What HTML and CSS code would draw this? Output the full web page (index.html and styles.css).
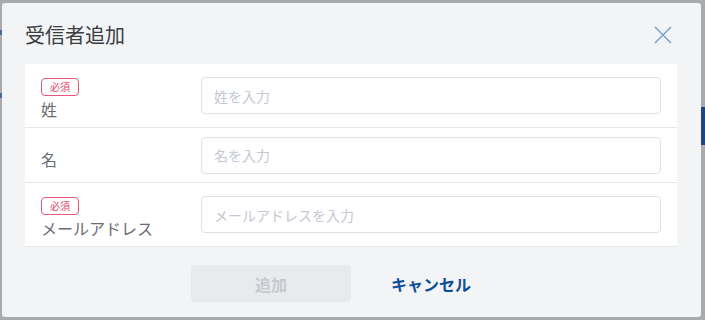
FILE: index.html
```html
<!DOCTYPE html>
<html lang="ja">
<head>
<meta charset="utf-8">
<link rel="stylesheet" href="styles.css">
</head>
<body>
<div class="backdrop">
  <div class="bg-block bg-left1"></div>
  <div class="bg-block bg-left2"></div>
  <div class="bg-block bg-right"></div>
  <div class="modal">
    <div class="modal-header">
      <h1 class="title">受信者追加</h1>
      <button class="close" aria-label="閉じる">
        <svg width="18" height="18" viewBox="0 0 18 18"><path d="M1 1L17 17M17 1L1 17" stroke="#7ba4d0" stroke-width="1.6" fill="none"/></svg>
      </button>
    </div>
    <div class="panel">
      <div class="row row-tall">
        <div class="label-col">
          <span class="badge">必須</span>
          <span class="label">姓</span>
        </div>
        <input class="field" type="text" placeholder="姓を入力">
      </div>
      <div class="row row-short">
        <div class="label-col">
          <span class="label">名</span>
        </div>
        <input class="field" type="text" placeholder="名を入力">
      </div>
      <div class="row row-tall">
        <div class="label-col">
          <span class="badge">必須</span>
          <span class="label">メールアドレス</span>
        </div>
        <input class="field" type="text" placeholder="メールアドレスを入力">
      </div>
    </div>
    <div class="actions">
      <button class="btn btn-add" disabled>追加</button>
      <button class="btn btn-cancel">キャンセル</button>
    </div>
  </div>
</div>
</body>
</html>
```

FILE: styles.css
```css
* { box-sizing: border-box; }
html, body {
  margin: 0;
  padding: 0;
  width: 705px;
  height: 320px;
  overflow: hidden;
  font-family: "Noto Sans CJK JP", "Noto Sans", sans-serif;
}
.backdrop {
  position: relative;
  width: 705px;
  height: 320px;
  background: #a9aaad;
}
.bg-block {
  position: absolute;
}
.bg-left1 { left: 0; top: 30px; width: 2px; height: 5px; background: #4a6b95; }
.bg-left2 { left: 0; top: 93px; width: 2px; height: 5px; background: #4a6b95; }
.bg-right { left: 701px; top: 107px; width: 4px; height: 38px; background: #1f477a; }
.modal {
  position: absolute;
  left: 2px;
  top: 3px;
  width: 699px;
  height: 314px;
  background: #f3f4f6;
  border-radius: 3px;
  padding: 0 24px 0 23px;
}
.modal-header {
  display: flex;
  align-items: center;
  justify-content: space-between;
  height: 61px;
  padding-top: 2px;
}
.title {
  margin: 0;
  font-size: 20px;
  font-weight: 400;
  line-height: 30px;
  color: #3a3d42;
}
.close {
  border: 0;
  background: none;
  padding: 0;
  margin-right: 5px;
  width: 18px;
  height: 18px;
  display: flex;
}
.panel {
  background: #fff;
}
.row {
  display: grid;
  grid-template-columns: 160px 1fr;
  align-items: center;
  padding: 0 16px;
  border-bottom: 1px solid #e6e7ec;
}
.row-tall { height: 64px; }
.row-short { height: 55px; }
.label-col {
  display: flex;
  flex-direction: column;
  align-items: flex-start;
  padding-top: 8px;
}
.badge {
  display: inline-block;
  height: 18px;
  line-height: 16px;
  padding: 0 8px;
  border: 1px solid #e8577a;
  border-radius: 4px;
  color: #e4476d;
  font-size: 10px;
  margin-bottom: 1px;
}
.label {
  font-size: 16px;
  line-height: 24px;
  color: #6b6d72;
}
.field {
  height: 37px;
  width: 100%;
  border: 1px solid #e0e1e7;
  border-radius: 4px;
  padding: 0 12px;
  font-family: inherit;
  font-size: 14px;
  color: #333;
  background: #fff;
  outline: none;
}
.field::placeholder {
  color: #c4c7d5;
}
.actions {
  display: flex;
  justify-content: center;
  margin-top: 18px;
}
.btn {
  width: 160px;
  height: 37px;
  border: 0;
  border-radius: 4px;
  font-family: inherit;
  font-size: 16px;
  font-weight: 700;
  background: none;
}
.btn-add {
  background: #e8ebee;
  color: #c6c9cd;
}
.btn-cancel {
  color: #0c4e98;
}
```
